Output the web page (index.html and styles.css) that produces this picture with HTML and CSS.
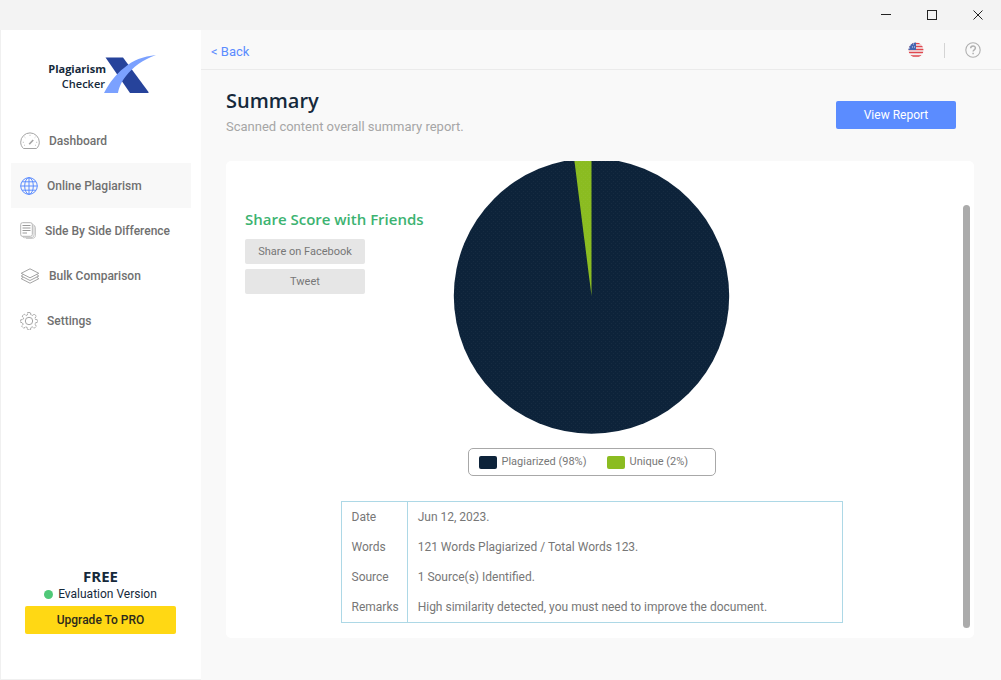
FILE: index.html
```html
<!DOCTYPE html>
<html lang="en">
<head>
<meta charset="utf-8">
<meta name="viewport" content="width=device-width, initial-scale=1">
<title>Plagiarism Checker X</title>
<link rel="stylesheet" href="styles.css">
</head>
<body>
<div class="window">
  <header class="titlebar">
    <button class="win-btn" type="button" aria-label="Minimize"><svg width="12" height="12" viewBox="0 0 12 12"><path d="M1 5.5h10" stroke="#222" fill="none"/></svg></button>
    <button class="win-btn" type="button" aria-label="Maximize"><svg width="12" height="12" viewBox="0 0 12 12"><rect x="1.5" y="1.5" width="9" height="9" stroke="#222" fill="none"/></svg></button>
    <button class="win-btn" type="button" aria-label="Close"><svg width="12" height="12" viewBox="0 0 12 12"><path d="M1.500 1.500l9 9M10.500 1.500l-9 9" stroke="#222" fill="none"/></svg></button>
  </header>
  <div class="body">
    <aside class="sidebar">
      <div class="logo">
        <div class="logo-text"><span class="logo-top">Plagiarism</span><span class="logo-bottom">Checker</span></div>
        <svg class="logo-mark" width="52" height="40" viewBox="0 0 52 40">
          <path d="M1.500 3.500H19L44.500 38v1H26z" fill="#26439b"/>
          <path d="M0 39C6 28 12 20 20 14C29 6 39 2.500 52 1C38 6 29 13 22 22C17 28 15 34 14 39z" fill="#7ba1ff"/>
        </svg>
      </div>
      <nav class="nav">
        <a class="nav-item" href="#"><svg width="20" height="18" viewBox="0 0 20 18" fill="none" stroke="#a4a4a4"><path d="M3.500 16.500C1.700 14.800 .7 12.700 .7 10.200a9.300 9.300 0 0 1 18.600 0c0 2.500-1 4.600-2.800 6.300z"/><path d="M9.200 12.300l4-4.300" stroke-width="1.600"/><path d="M10 2.800v1M4.600 5l.7.700M2.800 10.300h1M16.200 10.300h1M14.700 5.700l.7-.7M4 13.500l.8-.4M16 13.500l-.8-.4" stroke-width=".8"/></svg>Dashboard</a>
        <a class="nav-item active" href="#"><svg width="18" height="18" viewBox="0 0 18 18" fill="none" stroke="#5b8cff"><circle cx="9" cy="9" r="8.300"/><ellipse cx="9" cy="9" rx="4.300" ry="8.300"/><path d="M9 .7v16.600M.7 9h16.600M2 4.800h14M2 13.200h14"/></svg>Online Plagiarism</a>
        <a class="nav-item" href="#"><svg width="16" height="17" viewBox="0 0 16 17" fill="none" stroke="#b4b4b4"><rect x=".7" y=".7" width="11.600" height="13.600" rx="1.800"/><path d="M12.500 2.300c1 .1 1.500.7 1.500 1.700v8.500c0 2-1.200 3.200-3 3.200H4.500c-1 0-1.700-.4-1.900-1.400M14 3.700c.9.200 1.400.7 1.400 1.700v8c0 1.800-1.200 2.900-3 2.900H6" stroke-width=".8"/><path d="M2.500 3.500h8M2.500 6h8M2.500 8.500h8M2.500 11h4.500" stroke="#9a9a9a"/></svg>Side By Side Difference</a>
        <a class="nav-item" href="#"><svg width="20" height="16" viewBox="0 0 20 16" fill="none" stroke="#999" stroke-width=".9"><path d="M10 .8l8.800 4.500L10 9.800 1.200 5.300z"/><path d="M3.300 6.500L1.200 8l8.800 4.500L18.800 8l-2.100-1.500M3.300 9.200l-2.100 1.500L10 15.200l8.800-4.500-2.100-1.500"/></svg>Bulk Comparison</a>
        <a class="nav-item" href="#"><svg width="18" height="18" viewBox="0 0 18 18" fill="none" stroke="#a4a4a4"><circle cx="9" cy="9" r="3.700"/><path d="M7.500 .6h3l.4 2.300 1.400.6 2-1.400 2 2-1.300 2 .5 1.400 2.400.4v2.400l-2.400.5-.5 1.400 1.300 2-2 2-2-1.300-1.400.5-.4 2.400h-3l-.4-2.400-1.400-.5-2 1.300-2-2 1.400-2-.6-1.400L.6 10.300V7.900L3 7.500l.6-1.400-1.400-2 2-2 2 1.400 1.200-.6z" stroke-linejoin="round" stroke-dasharray="2.500 .6"/></svg>Settings</a>
      </nav>
      <div class="plan">
        <strong class="plan-name">FREE</strong>
        <span class="plan-status"><i class="dot"></i>Evaluation Version</span>
        <button class="btn upgrade" type="button">Upgrade To PRO</button>
      </div>
    </aside>
    <div class="main">
      <div class="toolbar">
        <a class="back" href="#">&lt; Back</a>
        <div class="tools">
          <button class="tool" type="button" aria-label="Language"><svg width="16" height="16" viewBox="0 0 16 16"><defs><clipPath id="flag"><circle cx="8" cy="8" r="7.500"/></clipPath></defs><g clip-path="url(#flag)"><path d="M0 0h16v16H0z" fill="#f5f0f1"/><path d="M0 1.500h16M0 4.500h16M0 7.500h16M0 10.500h16M0 14h16" stroke="#e0484f" stroke-width="1.700"/><path d="M0 0h8v8H0z" fill="#4465b0"/><path d="M2 3h1M5 2h1M4 5h1M1 6h1M6 5h1" stroke="#d8e0f4"/></g></svg></button>
          <span class="divider"></span>
          <button class="tool" type="button" aria-label="Help"><svg width="16" height="16" viewBox="0 0 16 16" fill="none" stroke="#b0b0b0"><circle cx="8" cy="8" r="7.200" stroke-width="1.100"/><path d="M5.700 6.300c0-3.200 4.700-3.100 4.700-.2 0 1.800-2.300 1.700-2.300 3.500M8.100 10.800v1.400" stroke-width="1.500"/></svg></button>
        </div>
      </div>
      <main class="content">
        <div class="heading">
          <div>
            <h1 class="title">Summary</h1>
            <p class="subtitle">Scanned content overall summary report.</p>
          </div>
          <button class="btn report" type="button">View Report</button>
        </div>
        <section class="card">
          <div class="scroll-area">
            <div class="score">
              <div class="share">
                <h2 class="share-title">Share Score with Friends</h2>
                <button class="share-btn" type="button">Share on Facebook</button>
                <button class="share-btn" type="button">Tweet</button>
              </div>
              <svg class="pie" width="277" height="273" viewBox="0 0 277 273" role="img" aria-label="98% plagiarized, 2% unique">
                <defs><pattern id="weave" width="4" height="4" patternUnits="userSpaceOnUse"><path d="M0 0h1v1H0zM2 2h1v1H2z" fill="#fff" fill-opacity=".035"/></pattern></defs>
                <circle cx="138.500" cy="135" r="137.700" fill="#0d233a"/>
                <path d="M138.500 135V-2.700A137.700 137.700 0 0 0 121.200-1.600z" fill="#8bbc21"/>
                <circle cx="138.500" cy="135" r="137.700" fill="url(#weave)"/>
              </svg>
            </div>
            <div class="legend">
              <span class="key"><i class="swatch navy"></i>Plagiarized (98%)</span>
              <span class="key"><i class="swatch green"></i>Unique (2%)</span>
            </div>
            <table class="details">
              <tr><th scope="row">Date</th><td>Jun 12, 2023.</td></tr>
              <tr><th scope="row">Words</th><td>121 Words Plagiarized / Total Words 123.</td></tr>
              <tr><th scope="row">Source</th><td>1 Source(s) Identified.</td></tr>
              <tr><th scope="row">Remarks</th><td>High similarity detected, you must need to improve the document.</td></tr>
            </table>
          </div>
          <div class="scrollbar"><div class="thumb"></div></div>
        </section>
      </main>
    </div>
  </div>
</div>
</body>
</html>
```
FILE: styles.css
```css
* { box-sizing: border-box; }

body {
  margin: 0;
  font-family: Roboto, "Open Sans", sans-serif;
  font-size: 12px;
  line-height: 16px;
  color: #777;
  background: #f9f9f9;
}

button { font: inherit; border: 0; padding: 0; cursor: pointer; }
a { text-decoration: none; color: inherit; }
svg { display: block; flex: none; }

.window { display: flex; flex-direction: column; min-height: 100vh; }

.titlebar {
  display: flex;
  justify-content: flex-end;
  height: 30px;
  background: #f3f3f3;
}
.win-btn {
  width: 46px;
  display: grid;
  place-items: center;
  background: transparent;
}

.body { flex: 1; display: flex; }

.sidebar {
  flex: none;
  width: 201px;
  display: flex;
  flex-direction: column;
  background: #fff;
  border-left: 1px solid #f0f0f0;
  border-bottom: 1px solid #f0f0f0;
}
.logo { display: flex; justify-content: flex-end; padding: 24px 45px 0 0; }
.logo-text {
  display: flex;
  flex-direction: column;
  align-items: flex-end;
  padding-top: 7px;
  font-family: "Open Sans", sans-serif;
  line-height: 15px;
  font-size: 11px;
  font-weight: 700;
  color: #15293b;
}
.logo-top { padding-right: 1px; }
.logo-bottom { padding-right: 2px; font-weight: 600; }
.logo-mark { margin-left: -3px; }

.nav { display: flex; flex-direction: column; padding: 24px 10px 0 10px; }
.nav-item {
  display: flex;
  align-items: center;
  gap: 9px;
  height: 45px;
  padding: 0 9px;
  font-weight: 500;
  color: #707070;
}
.nav-item.active { background: #f8f8f8; }

.plan {
  display: flex;
  flex-direction: column;
  align-items: center;
  margin-top: auto;
  padding: 0 25px 45px 24px;
  color: #15293b;
}
.plan-name { font-family: "Open Sans", sans-serif; font-size: 15px; line-height: 18px; }
.plan-status { display: flex; align-items: center; gap: 5px; height: 18px; margin-bottom: 3px; }
.dot { width: 9px; height: 9px; border-radius: 50%; background: #50c878; }

.btn { height: 28px; border-radius: 2px; }
.upgrade { width: 100%; background: #ffd814; color: #2c2a1c; font-weight: 500; }

.main { flex: 1; min-width: 0; display: flex; flex-direction: column; }
.toolbar {
  display: flex;
  align-items: center;
  justify-content: space-between;
  height: 40px;
  padding: 1px 20px 0 10px;
  border-bottom: 1px solid #ebebeb;
}
.back { color: #5b8cff; padding-top: 3px; font-size: 13px; }
.tools { display: flex; align-items: center; gap: 20px; }
.tool { background: transparent; }
.divider { width: 1px; height: 15px; background: #d4d4d4; }

.content { flex: 1; display: flex; flex-direction: column; padding: 17px 27px 42px 25px; }
.heading {
  display: flex;
  align-items: center;
  justify-content: space-between;
  padding-right: 18px;
}
.title {
  margin: 0;
  font-family: "Open Sans", sans-serif;
  font-size: 20px;
  line-height: 28px;
  font-weight: 600;
  color: #15293b;
}
.subtitle { margin: 0; font-size: 13px; line-height: 24px; color: #a6a6a6; }
.report { width: 120px; margin-top: 4px; background: #5b8cff; color: #fff; }

.card {
  flex: 1;
  display: flex;
  margin-top: 22px;
  background: #fff;
  border-radius: 5px;
}
.scroll-area { flex: 1; display: flex; flex-direction: column; align-items: center; }
.score {
  align-self: stretch;
  display: grid;
  grid-template-columns: 1fr auto 1fr;
}
.share {
  display: flex;
  flex-direction: column;
  align-items: flex-start;
  gap: 5px;
  padding: 48px 0 0 19px;
}
.share-title {
  margin: 0 0 5px;
  font-family: "Open Sans", sans-serif;
  font-size: 15px;
  line-height: 20px;
  font-weight: 600;
  color: #3cb371;
  white-space: nowrap;
}
.share-btn {
  width: 120px;
  height: 25px;
  border-radius: 2px;
  background: #e6e6e6;
  color: #777;
  font-size: 11px;
}

.legend {
  display: flex;
  gap: 20px;
  width: 248px;
  height: 28px;
  margin-top: 14px;
  padding: 0 10px;
  align-items: center;
  border: 1px solid #a8a8a8;
  border-radius: 5px;
  font-size: 11px;
}
.key { display: flex; align-items: center; gap: 5px; white-space: nowrap; }
.swatch { width: 18px; height: 13px; border-radius: 2px; }
.navy { background: #0d233a; }
.green { background: #8bbc21; }

.details {
  width: 502px;
  margin-top: 25px;
  border: 1px solid #add8e6;
  border-spacing: 0;
}
.details th, .details td {
  height: 30px;
  padding: 0 10px;
  font-weight: 400;
  text-align: left;
}
.details th { width: 66px; padding-right: 8px; border-right: 1px solid #add8e6; }

.scrollbar { width: 17px; padding: 44px 4px 10px 6px; }
.thumb { height: 100%; border-radius: 4px; background: #ababab; }
```
